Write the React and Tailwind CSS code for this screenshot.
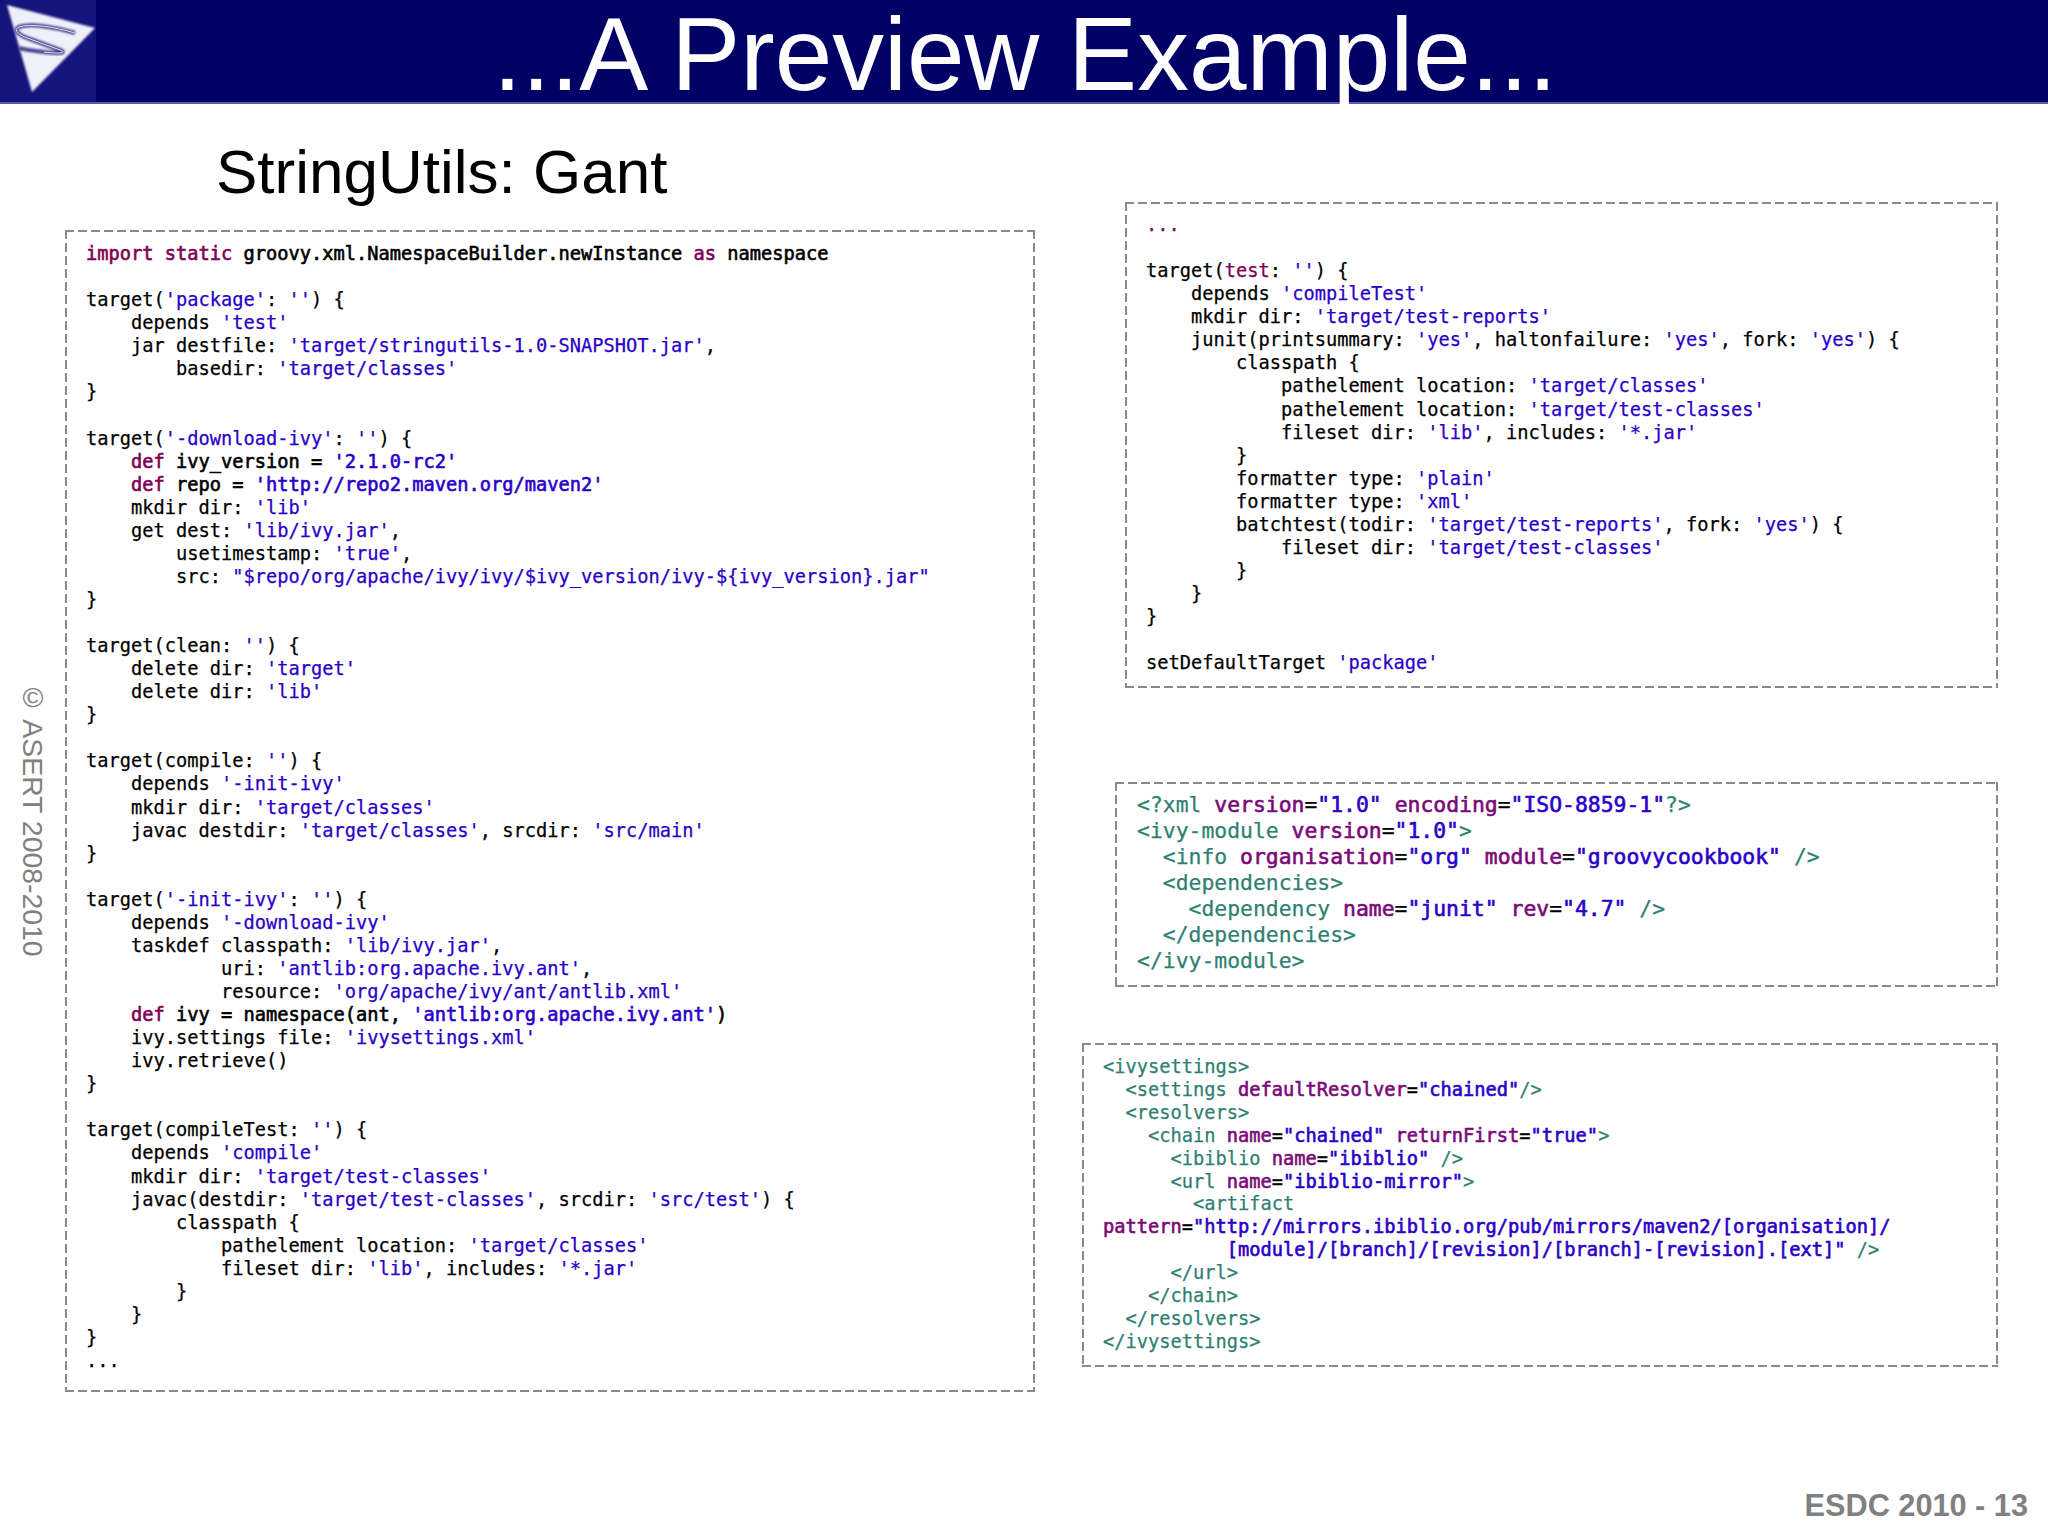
import React from 'react';

const dashed =
  '[background:repeating-linear-gradient(90deg,#8a8a8a_0_9px,transparent_9px_13px)_0_0/100%_2px_no-repeat,repeating-linear-gradient(90deg,#8a8a8a_0_9px,transparent_9px_13px)_0_100%/100%_2px_no-repeat,repeating-linear-gradient(180deg,#8a8a8a_0_9px,transparent_9px_13px)_0_0/2px_100%_no-repeat,repeating-linear-gradient(180deg,#8a8a8a_0_9px,transparent_9px_13px)_100%_0/2px_100%_no-repeat]';

const BLUE = 'text-[#2a00c8]';
const PURPLE = 'text-[#7f0055]';
const ATTR = 'text-[#7a0a78]';
const TAG = 'text-[#2f7f73]';
const HEAVY = '[-webkit-text-stroke:0.6px]';
const SOFT = '[-webkit-text-stroke:0.25px]';

// groovy highlighting: strings and a few keywords
const groovyLine = (line) => {
  if (line === '') return ' ';
  const bold = line.startsWith('!');
  const src = bold ? line.slice(1) : line;
  const weight = bold ? HEAVY : SOFT;
  const parts = src.split(/('[^']*'|"[^"]*"|\b(?:import|static|as|def)\b|\btest(?=: '')|^\.\.\.#)/);
  return parts.map((p, i) => {
    if (i % 2 === 0) return <span key={i} className={weight}>{p}</span>;
    if (p === '...#') return <span key={i} className={`${PURPLE} ${weight}`}>...</span>;
    if (p[0] === "'" || p[0] === '"') return <span key={i} className={`${BLUE} ${weight}`}>{p}</span>;
    return <span key={i} className={`${PURPLE} ${weight}`}>{p}</span>;
  });
};

// xml highlighting: a line may carry a raw "..." value that runs over two lines
const xmlLine = (line) => {
  if (Array.isArray(line)) {
    return line.map(([c, t], i) => <span key={i} className={c}>{t}</span>);
  }
  const parts = line.split(/("[^"]*"|[\w-]+(?==)|=)/);
  return parts.map((p, i) => {
    if (i % 2 === 0) return <span key={i} className={`${TAG} ${SOFT}`}>{p}</span>;
    if (p === '=') return <span key={i} className={`text-black ${SOFT}`}>{p}</span>;
    if (p[0] === '"') return <span key={i} className={`${BLUE} ${HEAVY}`}>{p}</span>;
    return <span key={i} className={`${ATTR} ${HEAVY}`}>{p}</span>;
  });
};

const buildFile = [
  "!import static groovy.xml.NamespaceBuilder.newInstance as namespace",
  "",
  "target('package': '') {",
  "    depends 'test'",
  "    jar destfile: 'target/stringutils-1.0-SNAPSHOT.jar',",
  "        basedir: 'target/classes'",
  "}",
  "",
  "target('-download-ivy': '') {",
  "!    def ivy_version = '2.1.0-rc2'",
  "!    def repo = 'http://repo2.maven.org/maven2'",
  "    mkdir dir: 'lib'",
  "    get dest: 'lib/ivy.jar',",
  "        usetimestamp: 'true',",
  "        src: \"$repo/org/apache/ivy/ivy/$ivy_version/ivy-${ivy_version}.jar\"",
  "}",
  "",
  "target(clean: '') {",
  "    delete dir: 'target'",
  "    delete dir: 'lib'",
  "}",
  "",
  "target(compile: '') {",
  "    depends '-init-ivy'",
  "    mkdir dir: 'target/classes'",
  "    javac destdir: 'target/classes', srcdir: 'src/main'",
  "}",
  "",
  "target('-init-ivy': '') {",
  "    depends '-download-ivy'",
  "    taskdef classpath: 'lib/ivy.jar',",
  "            uri: 'antlib:org.apache.ivy.ant',",
  "            resource: 'org/apache/ivy/ant/antlib.xml'",
  "!    def ivy = namespace(ant, 'antlib:org.apache.ivy.ant')",
  "    ivy.settings file: 'ivysettings.xml'",
  "    ivy.retrieve()",
  "}",
  "",
  "target(compileTest: '') {",
  "    depends 'compile'",
  "    mkdir dir: 'target/test-classes'",
  "    javac(destdir: 'target/test-classes', srcdir: 'src/test') {",
  "        classpath {",
  "            pathelement location: 'target/classes'",
  "            fileset dir: 'lib', includes: '*.jar'",
  "        }",
  "    }",
  "}",
  "...",
];

const testFile = [
  "...#",
  "",
  "target(test: '') {",
  "    depends 'compileTest'",
  "    mkdir dir: 'target/test-reports'",
  "    junit(printsummary: 'yes', haltonfailure: 'yes', fork: 'yes') {",
  "        classpath {",
  "            pathelement location: 'target/classes'",
  "            pathelement location: 'target/test-classes'",
  "            fileset dir: 'lib', includes: '*.jar'",
  "        }",
  "        formatter type: 'plain'",
  "        formatter type: 'xml'",
  "        batchtest(todir: 'target/test-reports', fork: 'yes') {",
  "            fileset dir: 'target/test-classes'",
  "        }",
  "    }",
  "}",
  "",
  "setDefaultTarget 'package'",
];

const ivyXml = [
  '<?xml version="1.0" encoding="ISO-8859-1"?>',
  '<ivy-module version="1.0">',
  '  <info organisation="org" module="groovycookbook" />',
  '  <dependencies>',
  '    <dependency name="junit" rev="4.7" />',
  '  </dependencies>',
  '</ivy-module>',
];

const settingsXml = [
  '<ivysettings>',
  '  <settings defaultResolver="chained"/>',
  '  <resolvers>',
  '    <chain name="chained" returnFirst="true">',
  '      <ibiblio name="ibiblio" />',
  '      <url name="ibiblio-mirror">',
  '        <artifact',
  [[`${ATTR} ${HEAVY}`, 'pattern'], [`text-black ${SOFT}`, '='], [`${BLUE} ${HEAVY}`, '"http://mirrors.ibiblio.org/pub/mirrors/maven2/[organisation]/']],
  [[`${BLUE} ${HEAVY}`, '           [module]/[branch]/[revision]/[branch]-[revision].[ext]"'], [`${TAG} ${SOFT}`, ' />']],
  '      </url>',
  '    </chain>',
  '  </resolvers>',
  '</ivysettings>',
];

const CodeBox = ({ lines, render, className }) => (
  <div className={`${dashed} ${className}`}>
    {lines.map((l, i) => (
      <div key={i} className="whitespace-pre">{render(l)}</div>
    ))}
  </div>
);

const Logo = () => (
  <div className="w-24 h-full bg-[#14147c] shrink-0">
    <svg width="96" height="100" viewBox="0 0 96 100">
      <defs>
        <filter id="soft" x="-10%" y="-10%" width="120%" height="120%">
          <feGaussianBlur stdDeviation="0.8" />
        </filter>
      </defs>
      <polygon points="7,5 95,28 32,92" fill="#f0f0fb" filter="url(#soft)" />
      <path d="M75 33 C55 27 30 23 19 27 C12 30 20 36 30 39 L60 50 C68 53 58 54 44 52 C35 51 26 50 19 48" fill="none" stroke="#45458e" strokeWidth="4" filter="url(#soft)" />
      <path d="M75 33 C55 27 30 23 19 27 C12 30 20 36 30 39 L60 50 C68 53 58 54 44 52" fill="none" stroke="#e4e4f4" strokeWidth="1" />
    </svg>
  </div>
);

export default function App() {
  return (
    <div
      className="relative w-[2048px] h-[1536px] overflow-hidden bg-white flex flex-col font-['Liberation_Sans',Arial,sans-serif]"
    >
      <header className="h-[104px] shrink-0 flex bg-[#000066] border-b-2 border-[#5a5aa8]">
        <Logo />
        <h1 className="flex-1 text-center text-white text-[103.5px] leading-[108px] font-normal pr-[94px] whitespace-nowrap">...A Preview Example...</h1>
      </header>

      <main className="flex-1 flex items-start font-['DejaVu_Sans_Mono',monospace] text-black text-[18.7px] leading-[22.9px]">
        <section className="pl-[65px] w-[1035px] shrink-0">
          <h2 className="pl-[151px] pt-[34px] h-[126px] font-['Liberation_Sans',Arial,sans-serif] text-[62px] leading-[68px]">StringUtils: Gant</h2>
          <CodeBox lines={buildFile} render={groovyLine} className="h-[1162px] pl-[21px] pt-[12px] leading-[23.07px]" />
        </section>

        <section className="flex-1 flex flex-col items-end pr-[50px] pt-[98px]">
          <CodeBox lines={testFile} render={groovyLine} className="w-[873px] h-[486px] pl-[21px] pt-[11px] leading-[23.07px]" />
          <CodeBox lines={ivyXml} render={xmlLine} className="w-[883px] h-[205px] mt-[94px] pl-[22px] pt-[10px] text-[21.4px] leading-[26px]" />
          <CodeBox lines={settingsXml} render={xmlLine} className="w-[916px] h-[324px] mt-[56px] pl-[21px] pt-[13px]" />
        </section>
      </main>

      <footer className="absolute right-5 bottom-[12px] font-bold text-[#808080] text-[30.7px] leading-9">ESDC 2010 - 13</footer>
      <div className="absolute left-[18px] top-[681px] [writing-mode:vertical-rl] text-[#808080] text-[28.4px] leading-[30px]">© ASERT 2008-2010</div>
    </div>
  );
}
